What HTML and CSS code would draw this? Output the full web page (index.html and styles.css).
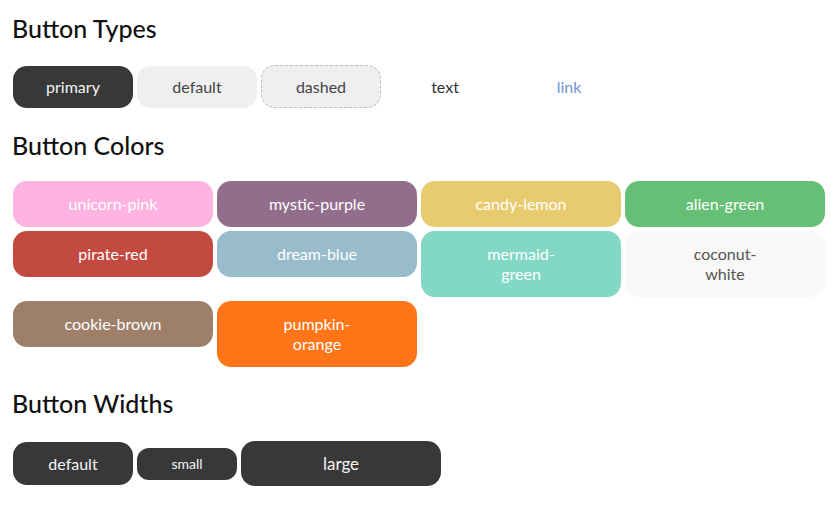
FILE: index.html
```html
<!DOCTYPE html>
<html>
<head>
<meta charset="utf-8">
<link rel="stylesheet" href="styles.css">
</head>
<body>
<main class="page">
  <section class="section section-types">
    <h2 class="title">Button Types</h2>
    <div class="row row-types">
      <button class="btn btn-type btn-primary">primary</button>
      <button class="btn btn-type btn-default">default</button>
      <button class="btn btn-type btn-dashed">dashed</button>
      <button class="btn btn-type btn-text">text</button>
      <button class="btn btn-type btn-link">link</button>
    </div>
  </section>
  <section class="section section-colors">
    <h2 class="title">Button Colors</h2>
    <div class="row row-colors">
      <button class="btn btn-color c-pink">unicorn-pink</button>
      <button class="btn btn-color c-purple">mystic-purple</button>
      <button class="btn btn-color c-lemon">candy-lemon</button>
      <button class="btn btn-color c-green">alien-green</button>
      <button class="btn btn-color c-red">pirate-red</button>
      <button class="btn btn-color c-blue">dream-blue</button>
      <button class="btn btn-color c-mermaid">mermaid-<br>green</button>
      <button class="btn btn-color c-white">coconut-<br>white</button>
      <button class="btn btn-color c-brown">cookie-brown</button>
      <button class="btn btn-color c-orange">pumpkin-<br>orange</button>
    </div>
  </section>
  <section class="section section-widths">
    <h2 class="title">Button Widths</h2>
    <div class="row row-widths">
      <button class="btn btn-primary w-default">default</button>
      <button class="btn btn-primary w-small">small</button>
      <button class="btn btn-primary w-large">large</button>
    </div>
  </section>
</main>
</body>
</html>
```
FILE: styles.css
```css
* { box-sizing: border-box; }
html, body { margin: 0; padding: 0; background: #fff; }
body {
  font-family: "Lato", "Open Sans", sans-serif;
  color: #222;
}
.page { padding: 13px 0 0 12px; }
.title {
  margin: 0;
  font-size: 25px;
  font-weight: 500;
  line-height: 30px;
  color: #111;
}
.section-colors .title { margin-top: 22px; }
.section-widths .title { margin-top: 21px; }
.row {
  display: flex;
  flex-wrap: wrap;
  gap: 4px;
  padding-left: 1px;
}
.row-types { margin-top: 22px; align-items: center; }
.row-colors { margin-top: 21px; align-items: flex-start; width: 820px; }
.row-widths { margin-top: 23px; align-items: center; }

.btn {
  font-family: inherit;
  font-size: 16px;
  line-height: 20px;
  border: 0;
  margin: 0;
  padding: 0 10px;
  border-radius: 14px;
  cursor: pointer;
  display: flex;
  align-items: center;
  justify-content: center;
  text-align: center;
}
.btn-type { width: 120px; height: 42px; }
.btn-primary { background: #383838; color: #f4f4f4; }
.btn-default { background: #efefef; color: #444; }
.btn-dashed { background: #efefef; color: #444; border: 1px dashed #bdbdbd; height: 43px; }
.btn-text { background: transparent; color: #333; }
.btn-link { background: transparent; color: #7393d6; }

.btn-color {
  width: 200px;
  padding: 13px 10px;
  color: #fff;
}
.c-pink { background: #ffb3e1; }
.c-purple { background: #926e8c; }
.c-lemon { background: #e8ca6f; }
.c-green { background: #65bf74; }
.c-red { background: #c24a40; }
.c-blue { background: #99bccc; }
.c-mermaid { background: #82d8c5; }
.c-white { background: #f8f8f6; color: #555; }
.c-brown { background: #9e7f69; }
.c-orange { background: #ff7518; }

.w-default { width: 120px; height: 43px; }
.w-small { width: 100px; height: 32px; font-size: 14px; border-radius: 12px; }
.w-large { width: 200px; height: 45px; font-size: 17px; }
```
